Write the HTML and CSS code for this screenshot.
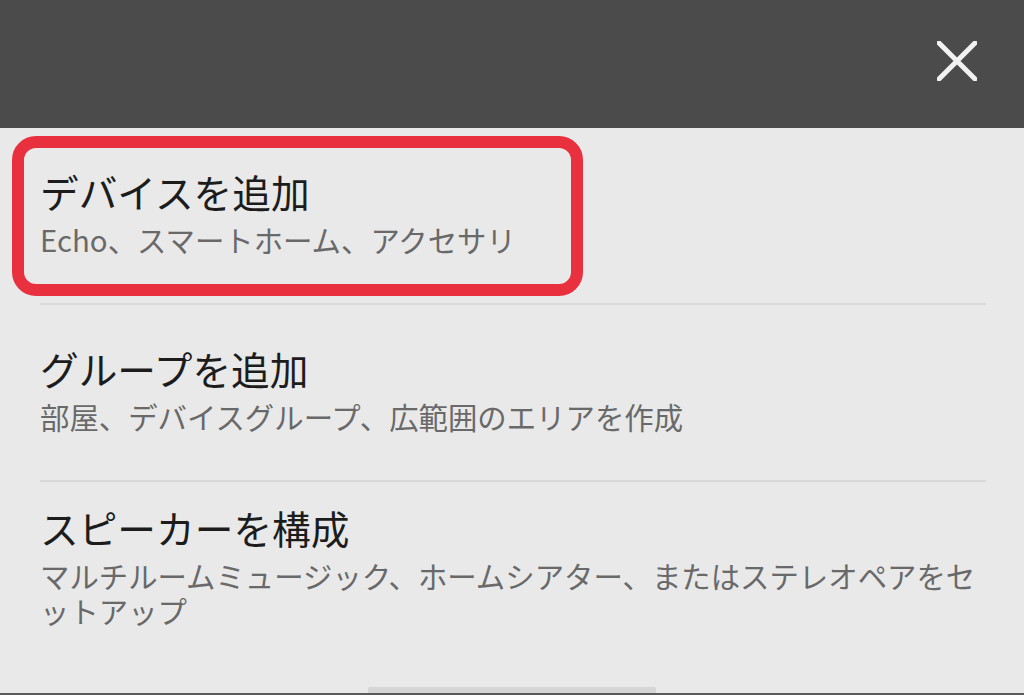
FILE: index.html
```html
<!DOCTYPE html>
<html lang="ja">
<head>
<meta charset="utf-8">
<title>追加</title>
<link rel="stylesheet" href="styles.css">
</head>
<body>
<div class="sheet">
  <header class="topbar">
    <button class="close" aria-label="閉じる">
      <svg width="40" height="40" viewBox="0 0 40 40"><path d="M2 2 L38 38 M38 2 L2 38" stroke="#f2f2f2" stroke-width="5" stroke-linecap="round" fill="none"/></svg>
    </button>
  </header>
  <ul class="menu">
    <li class="item item-highlight">
      <div class="title">デバイスを追加</div>
      <div class="sub">Echo、スマートホーム、アクセサリ</div>
      <span class="mark"></span>
    </li>
    <li class="item">
      <div class="title">グループを追加</div>
      <div class="sub">部屋、デバイスグループ、広範囲のエリアを作成</div>
    </li>
    <li class="item item-last">
      <div class="title">スピーカーを構成</div>
      <div class="sub">マルチルームミュージック、ホームシアター、またはステレオペアをセットアップ</div>
    </li>
  </ul>
  <footer class="bottom">
    <div class="thumb"></div>
    <div class="edge"></div>
  </footer>
</div>
</body>
</html>
```

FILE: styles.css
```css
html, body {
  margin: 0;
  padding: 0;
  background: #e9e9e9;
}
body {
  font-family: "Noto Sans CJK JP", "Noto Sans", sans-serif;
}
.sheet {
  width: 1024px;
  height: 695px;
  display: flex;
  flex-direction: column;
  overflow: hidden;
}
.topbar {
  height: 128px;
  flex: none;
  background: #4b4b4b;
  display: flex;
  justify-content: flex-end;
  align-items: center;
  padding-right: 47px;
}
.close {
  background: none;
  border: 0;
  padding: 0;
  width: 40px;
  height: 40px;
  margin-top: -6px;
  display: block;
}
.close svg { display: block; }
.menu {
  list-style: none;
  margin: 0;
  padding: 0 38px 0 40px;
  flex: 1;
}
.item {
  position: relative;
  box-sizing: border-box;
  min-height: 177px;
  padding-bottom: 7px;
  display: flex;
  flex-direction: column;
  justify-content: center;
  border-bottom: 2px solid #d9d9d9;
}
.item-last {
  border-bottom: 0;
  min-height: 175px;
}
.title {
  font-size: 38.7px;
  line-height: 46px;
  color: #1c1c1c;
  margin-bottom: 8px;
}
.sub {
  font-size: 29.4px;
  line-height: 35px;
  color: #696969;
}
.mark {
  position: absolute;
  left: -28px;
  top: 8px;
  width: 571px;
  height: 160px;
  box-sizing: border-box;
  border: 12px solid #e8303f;
  border-radius: 24px;
}
.bottom {
  flex: none;
  display: flex;
  flex-direction: column;
  align-items: center;
}
.thumb {
  width: 288px;
  height: 6px;
  background: #d6d6d6;
  border-radius: 2px 2px 0 0;
}
.edge {
  align-self: stretch;
  height: 2px;
  background: #5a5a5a;
}
```
